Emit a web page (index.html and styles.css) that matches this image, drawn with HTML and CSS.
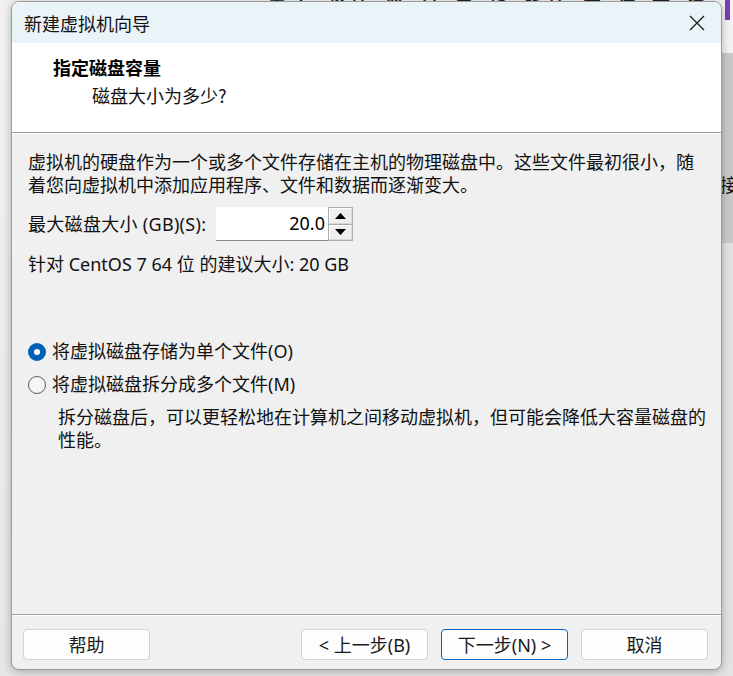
FILE: index.html
```html
<!DOCTYPE html>
<html lang="zh-CN">
<head>
<meta charset="utf-8">
<title>新建虚拟机向导</title>
<link rel="stylesheet" href="styles.css">
</head>
<body>
<div class="desktop">
  <div class="bg-top">基本 软件 器 管 会 接 硬件 区 在 上 设 的 计 的 网</div>
  <div class="bg-right">
    <div class="bg-right-top"><span class="bg-purple"></span></div>
    <div class="bg-right-mid"><span class="bg-char">接</span></div>
    <div class="bg-right-low"></div>
  </div>

  <div class="window">
    <div class="titlebar">
      <span class="title">新建虚拟机向导</span>
      <svg class="close" width="16" height="16" viewBox="0 0 16 16"><path d="M1 1 L15 15 M15 1 L1 15" stroke="#1a1a1a" stroke-width="1.3" fill="none"/></svg>
    </div>
    <div class="header">
      <div class="h-title">指定磁盘容量</div>
      <div class="h-sub">磁盘大小为多少?</div>
    </div>
    <div class="etched"></div>
    <div class="content">
      <div class="para">
        <div class="line">虚拟机的硬盘作为一个或多个文件存储在主机的物理磁盘中。这些文件最初很小，随</div>
        <div class="line">着您向虚拟机中添加应用程序、文件和数据而逐渐变大。</div>
      </div>
      <div class="size-row">
        <span class="size-label">最大磁盘大小 (GB)(S):</span>
        <div class="spin">
          <div class="spin-input">20.0</div>
          <div class="spin-btns">
            <div class="spin-btn"><svg width="11" height="6" viewBox="0 0 11 6"><path d="M5.5 0 L11 6 L0 6 Z" fill="#000"/></svg></div>
            <div class="spin-btn"><svg width="11" height="6" viewBox="0 0 11 6"><path d="M0 0 L11 0 L5.5 6 Z" fill="#000"/></svg></div>
          </div>
        </div>
      </div>
      <div class="recommend">针对 CentOS 7 64 位 的建议大小: 20 GB</div>
      <div class="radio-row first">
        <span class="radio checked"></span>
        <span class="radio-label">将虚拟磁盘存储为单个文件(O)</span>
      </div>
      <div class="radio-row">
        <span class="radio"></span>
        <span class="radio-label">将虚拟磁盘拆分成多个文件(M)</span>
      </div>
      <div class="desc">
        <div class="line">拆分磁盘后，可以更轻松地在计算机之间移动虚拟机，但可能会降低大容量磁盘的</div>
        <div class="line">性能。</div>
      </div>
    </div>
    <div class="etched"></div>
    <div class="footer">
      <button class="btn">帮助</button>
      <div class="spacer"></div>
      <button class="btn">&lt; 上一步(B)</button>
      <button class="btn primary">下一步(N) &gt;</button>
      <button class="btn">取消</button>
    </div>
  </div>
</div>
</body>
</html>
```

FILE: styles.css
```css
html, body {
  margin: 0;
  padding: 0;
}
body {
  width: 733px;
  height: 676px;
  overflow: hidden;
  background: #e8e8e8;
  font-family: "Noto Sans", "Noto Sans CJK SC", sans-serif;
  font-size: 18px;
  color: #111;
}
.desktop {
  position: relative;
  width: 733px;
  height: 676px;
  overflow: hidden;
  background: linear-gradient(#f2f2f2, #e6e6e6);
}
.bg-top {
  position: absolute;
  top: -16px;
  left: 268px;
  font-size: 18px;
  line-height: 20px;
  color: #222;
  font-weight: bold;
  letter-spacing: 6px;
  white-space: nowrap;
}
.bg-right {
  position: absolute;
  left: 722px;
  top: 0;
  width: 11px;
  height: 676px;
  display: flex;
  flex-direction: column;
}
.bg-right-top {
  height: 53px;
  background: #f3f3f3;
  position: relative;
}
.bg-purple {
  position: absolute;
  left: 3px;
  top: 0;
  width: 5px;
  height: 20px;
  background: #7a3db8;
}
.bg-right-mid {
  height: 190px;
  background: #c9c9c9;
  position: relative;
  overflow: hidden;
}
.bg-char {
  position: absolute;
  left: -2px;
  top: 121px;
  font-family: "Noto Sans CJK SC", sans-serif;
  font-size: 18px;
  line-height: 20px;
  color: #111;
}
.bg-right-low {
  flex: 1;
  background: #e3e3e3;
}

.window {
  position: absolute;
  left: 11px;
  top: 1px;
  width: 709px;
  height: 667px;
  border: 1px solid #9c9c9c;
  border-radius: 8px;
  overflow: hidden;
  background: #f0f0f0;
  box-shadow: 0 2px 8px rgba(0, 0, 0, 0.28);
  display: flex;
  flex-direction: column;
  z-index: 2;
}
.titlebar {
  height: 41px;
  flex: none;
  background: #eaf3f7;
  display: flex;
  align-items: center;
  padding: 0 16px 0 12px;
}
.title {
  flex: 1;
  font-family: "Noto Sans CJK SC", sans-serif;
  font-size: 18px;
  line-height: 22px;
  color: #111;
}
.close {
  display: block;
}
.header {
  height: 89px;
  flex: none;
  background: #fff;
  padding: 13px 0 0 41px;
  box-sizing: border-box;
}
.h-title {
  font-family: "Noto Sans CJK SC", sans-serif;
  font-weight: bold;
  font-size: 18px;
  line-height: 23px;
  color: #000;
}
.h-sub {
  margin-top: 5px;
  padding-left: 39px;
  font-family: "Noto Sans CJK SC", sans-serif;
  font-size: 18px;
  line-height: 23px;
  color: #111;
}
.etched {
  flex: none;
  height: 1px;
  background: #a0a0a0;
  border-bottom: 1px solid #fff;
}
.content {
  flex: 1;
  padding: 16px 0 0 16px;
}
.para,
.desc {
  font-family: "Noto Sans CJK SC", sans-serif;
  color: #111;
}
.line {
  height: 23px;
  line-height: 23px;
  white-space: nowrap;
}
.size-row {
  margin-top: 11px;
  height: 34px;
  display: flex;
  align-items: center;
}
.size-label {
  width: 188px;
  line-height: 23px;
  white-space: nowrap;
  letter-spacing: 0.3px;
}
.spin {
  display: flex;
  height: 34px;
}
.spin-input {
  width: 112px;
  height: 34px;
  box-sizing: border-box;
  background: #fff;
  border-bottom: 1px solid #8a8a8a;
  text-align: right;
  padding-right: 3px;
  line-height: 33px;
  font-size: 18px;
  color: #000;
}
.spin-btns {
  width: 25px;
  height: 34px;
  box-sizing: border-box;
  border: 1px solid #adadad;
  display: flex;
  flex-direction: column;
  background: #adadad;
  gap: 1px;
}
.spin-btn {
  flex: 1;
  background: #efefef;
  border: 1px solid #fff;
  border-right-color: #d8d8d8;
  border-bottom-color: #d8d8d8;
  display: flex;
  align-items: center;
  justify-content: center;
}
.spin-btn svg {
  display: block;
}
.recommend {
  margin-top: 12px;
  line-height: 23px;
  white-space: nowrap;
}
.radio-row {
  display: flex;
  align-items: center;
  height: 23px;
  margin-top: 10px;
}
.radio-row.first {
  margin-top: 64px;
}
.radio {
  width: 18px;
  height: 18px;
  box-sizing: border-box;
  border-radius: 50%;
  border: 1px solid #5c5c5c;
  background: #f6f6f6;
  margin-right: 6px;
  flex: none;
}
.radio.checked {
  border: 6px solid #0060b8;
  background: #fff;
}
.radio-label {
  line-height: 23px;
  white-space: nowrap;
}
.desc {
  margin: 9px 0 0 30px;
}
.footer {
  flex: none;
  height: 53px;
  box-sizing: border-box;
  padding: 13px 13px 0 11px;
  display: flex;
  gap: 13px;
}
.spacer {
  flex: 1;
}
.btn {
  width: 127px;
  height: 31px;
  box-sizing: border-box;
  border: 1px solid #d2d2d2;
  border-radius: 4px;
  background: #fdfdfd;
  font-family: "Noto Sans", "Noto Sans CJK SC", sans-serif;
  font-size: 18px;
  line-height: 28px;
  color: #1a1a1a;
  padding: 0;
  text-align: center;
}
.btn.primary {
  border-color: #0067c0;
}
```
